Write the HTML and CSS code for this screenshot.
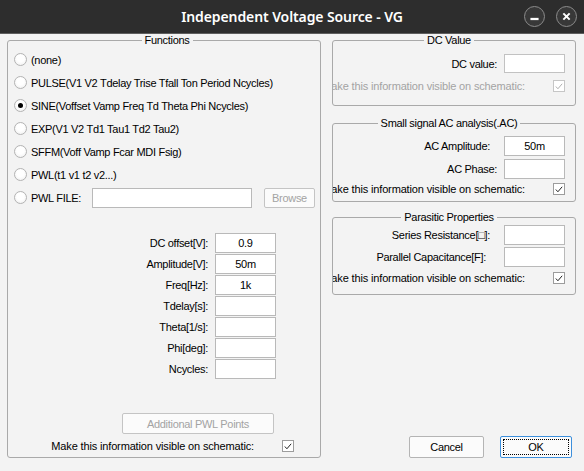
FILE: index.html
```html
<!DOCTYPE html>
<html>
<head>
<meta charset="utf-8">
<link rel="stylesheet" href="styles.css">
</head>
<body>
<div class="titlebar">
  <div class="title">Independent Voltage Source - VG</div>
  <div class="wm">
    <span class="wm-btn"><svg width="21" height="21" viewBox="0 0 21 21"><rect x="6" y="12" width="9" height="2.5" fill="#fff"/></svg></span>
    <span class="wm-btn"><svg width="21" height="21" viewBox="0 0 21 21"><path d="M7 7 L14 14 M14 7 L7 14" stroke="#fff" stroke-width="2.2" fill="none"/></svg></span>
  </div>
</div>
<div class="content">
  <fieldset class="group functions">
    <legend>Functions</legend>
    <div class="radios">
      <div class="radio"><span class="rb"></span>(none)</div>
      <div class="radio"><span class="rb"></span>PULSE(V1 V2 Tdelay Trise Tfall Ton Period Ncycles)</div>
      <div class="radio"><span class="rb checked"></span>SINE(Voffset Vamp Freq Td Theta Phi Ncycles)</div>
      <div class="radio"><span class="rb"></span>EXP(V1 V2 Td1 Tau1 Td2 Tau2)</div>
      <div class="radio"><span class="rb"></span>SFFM(Voff Vamp Fcar MDI Fsig)</div>
      <div class="radio"><span class="rb"></span>PWL(t1 v1 t2 v2...)</div>
      <div class="radio"><span class="rb"></span><span class="pwl-label">PWL FILE:</span><span class="input pwl-input"></span><span class="btn disabled browse">Browse</span></div>
    </div>
    <div class="params">
      <span class="plabel">DC offset[V]:</span><span class="input">0.9</span>
      <span class="plabel">Amplitude[V]:</span><span class="input">50m</span>
      <span class="plabel">Freq[Hz]:</span><span class="input">1k</span>
      <span class="plabel">Tdelay[s]:</span><span class="input"></span>
      <span class="plabel">Theta[1/s]:</span><span class="input"></span>
      <span class="plabel">Phi[deg]:</span><span class="input"></span>
      <span class="plabel">Ncycles:</span><span class="input"></span>
    </div>
    <div class="btn disabled addpwl">Additional PWL Points</div>
    <div class="visrow left-vis">
      <span class="vislabel">Make this information visible on schematic:</span>
      <span class="cb"><svg width="11" height="11" viewBox="0 0 11 11"><path d="M2 5.5 L4.3 8 L9 2.5" fill="none" stroke="#222" stroke-width="1.1"/></svg></span>
    </div>
  </fieldset>
  <div class="right">
    <fieldset class="group dcgroup">
      <legend>DC Value</legend>
      <div class="frow dcrow"><span class="flabel">DC value:</span><span class="input disabled-input"></span></div>
      <div class="visrow rvis disabled">
        <span class="vislabel">Make this information visible on schematic:</span>
        <span class="cb dis"><svg width="11" height="11" viewBox="0 0 11 11"><path d="M2 5.5 L4.3 8 L9 2.5" fill="none" stroke="#b0b0b0" stroke-width="1.1"/></svg></span>
      </div>
    </fieldset>
    <fieldset class="group acgroup">
      <legend>Small signal AC analysis(.AC)</legend>
      <div class="frow"><span class="flabel pad-l">AC Amplitude:</span><span class="input">50m</span></div>
      <div class="frow acphase"><span class="flabel">AC Phase:</span><span class="input"></span></div>
      <div class="visrow rvis acvis">
        <span class="vislabel">Make this information visible on schematic:</span>
        <span class="cb"><svg width="11" height="11" viewBox="0 0 11 11"><path d="M2 5.5 L4.3 8 L9 2.5" fill="none" stroke="#222" stroke-width="1.1"/></svg></span>
      </div>
    </fieldset>
    <fieldset class="group pargroup">
      <legend>Parasitic Properties</legend>
      <div class="frow"><span class="flabel pad-l">Series Resistance[□]:</span><span class="input"></span></div>
      <div class="frow parcap"><span class="flabel pad-xl">Parallel Capacitance[F]:</span><span class="input"></span></div>
      <div class="visrow rvis parvis">
        <span class="vislabel">Make this information visible on schematic:</span>
        <span class="cb"><svg width="11" height="11" viewBox="0 0 11 11"><path d="M2 5.5 L4.3 8 L9 2.5" fill="none" stroke="#222" stroke-width="1.1"/></svg></span>
      </div>
    </fieldset>
    <div class="dlg-buttons">
      <span class="btn cancel">Cancel</span>
      <span class="btn ok"><span class="focus">OK</span></span>
    </div>
  </div>
</div>
</body>
</html>
```
FILE: styles.css
```css
* { box-sizing: border-box; }
html, body { margin: 0; padding: 0; }
body {
  width: 584px;
  height: 471px;
  overflow: hidden;
  background: #f3f3f3;
  color: #000;
  font-family: "Liberation Sans", Arial, sans-serif;
  font-size: 11px;
  letter-spacing: -0.3px;
}

.titlebar {
  height: 34px;
  background: #2d2d2d;
  border-bottom: 1px solid #5e5e5e;
  display: grid;
  grid-template-columns: 1fr auto 1fr;
  align-items: center;
  letter-spacing: 0;
}
.title {
  grid-column: 2;
  color: #fff;
  font-family: "Noto Sans", sans-serif;
  font-weight: 600;
  font-size: 14px;
  letter-spacing: -0.1px;
}
.wm {
  grid-column: 3;
  justify-self: end;
  display: flex;
  gap: 11px;
  padding-right: 7px;
}
.wm-btn {
  width: 21px;
  height: 21px;
  border-radius: 50%;
  border: 1px solid #8c8c8c;
  background: #383838;
  display: flex;
  align-items: center;
  justify-content: center;
  overflow: hidden;
}
.wm-btn svg { display: block; }

.content {
  display: flex;
  gap: 11px;
  padding: 0 8px 0 7px;
  height: 424px;
}

.group {
  margin: 0;
  padding: 0;
  min-width: 0;
  border: 1px solid #a9a9a9;
  border-radius: 3px;
}
.group legend {
  margin: 0 auto;
  padding: 0 3px;
  line-height: 13px;
  height: 13px;
  font-size: 11px;
}

.functions {
  width: 314px;
  height: 424px;
  padding: 1px 0 0 6px;
}
.radio {
  height: 23px;
  display: flex;
  align-items: center;
  gap: 4px;
}
.rb {
  width: 13px;
  height: 13px;
  border-radius: 50%;
  border: 1px solid #b3b3b3;
  background: radial-gradient(circle at 50% 40%, #fff 40%, #ececec 100%);
  position: relative;
  flex: none;
}
.rb.checked::after {
  content: "";
  position: absolute;
  left: 3px;
  top: 3px;
  width: 5px;
  height: 5px;
  border-radius: 50%;
  background: #000;
}
.pwl-label { width: 57px; }
.input {
  display: flex;
  align-items: center;
  justify-content: center;
  height: 20px;
  width: 61px;
  background: #fff;
  border: 1px solid #b9b9b9;
}
.pwl-input { width: 160px; }
.btn {
  display: flex;
  align-items: center;
  justify-content: center;
  border: 1px solid #b4b4b4;
  border-radius: 2px;
  background: #fbfbfb;
}
.btn.disabled { color: #a3a3a3; border-color: #c4c4c4; }
.browse {
  width: 51px;
  height: 20px;
  margin-left: 8px;
}

.params {
  display: grid;
  grid-template-columns: 200px 61px;
  column-gap: 7px;
  row-gap: 1px;
  margin-top: 24px;
  margin-left: -6px;
}
.plabel {
  text-align: right;
  align-self: center;
}

.addpwl {
  width: 152px;
  height: 21px;
  margin-top: 34px;
  margin-left: 108px;
}

.visrow {
  display: flex;
  align-items: center;
  justify-content: flex-end;
  height: 14px;
  overflow: hidden;
  white-space: nowrap;
  gap: 28px;
}
.vislabel { flex: none; letter-spacing: -0.15px; }
.left-vis {
  margin-top: 5px;
  padding-right: 26px;
}
.cb {
  width: 12px;
  height: 12px;
  flex: none;
  border: 1px solid #9c9c9c;
  background: #fff;
  display: flex;
  align-items: center;
  justify-content: center;
}
.cb.dis { border-color: #c6c6c6; }
.visrow.disabled { color: #a3a3a3; }

.right {
  width: 244px;
  display: flex;
  flex-direction: column;
}
.dcgroup { padding: 0 10px 12px 0; }
.acgroup { margin-top: 11px; padding: 0 10px 5px 0; }
.pargroup { margin-top: 9px; padding: 0 10px 9px 0; }

.frow {
  display: flex;
  justify-content: flex-end;
  align-items: center;
  gap: 7px;
}
.frow .input { height: 20px; }
.dcrow { margin-top: 7px; }
.dcgroup .disabled-input { height: 19px; border-color: #c2c2c2; }
.dcgroup .rvis { margin-top: 6px; }
.acgroup .frow:first-of-type { margin-top: 6px; }
.acphase { margin-top: 3px; }
.acvis { margin-top: 3px; }
.pargroup .frow:first-of-type { margin-top: 1px; }
.parcap { margin-top: 2px; }
.parvis { margin-top: 4px; }
.rvis { padding-right: 0; }
.pad-l { margin-right: 7px; }
.pad-xl { margin-right: 11px; }

.dlg-buttons {
  margin-top: auto;
  display: flex;
  justify-content: flex-end;
  gap: 16px;
  padding-right: 4px;
}
.cancel {
  width: 75px;
  height: 22px;
}
.ok {
  width: 72px;
  height: 22px;
  border-color: #3c8fdc;
  padding: 2px;
}
.focus {
  width: 100%;
  height: 100%;
  border: 1px dotted #000;
  display: flex;
  align-items: center;
  justify-content: center;
}
```
